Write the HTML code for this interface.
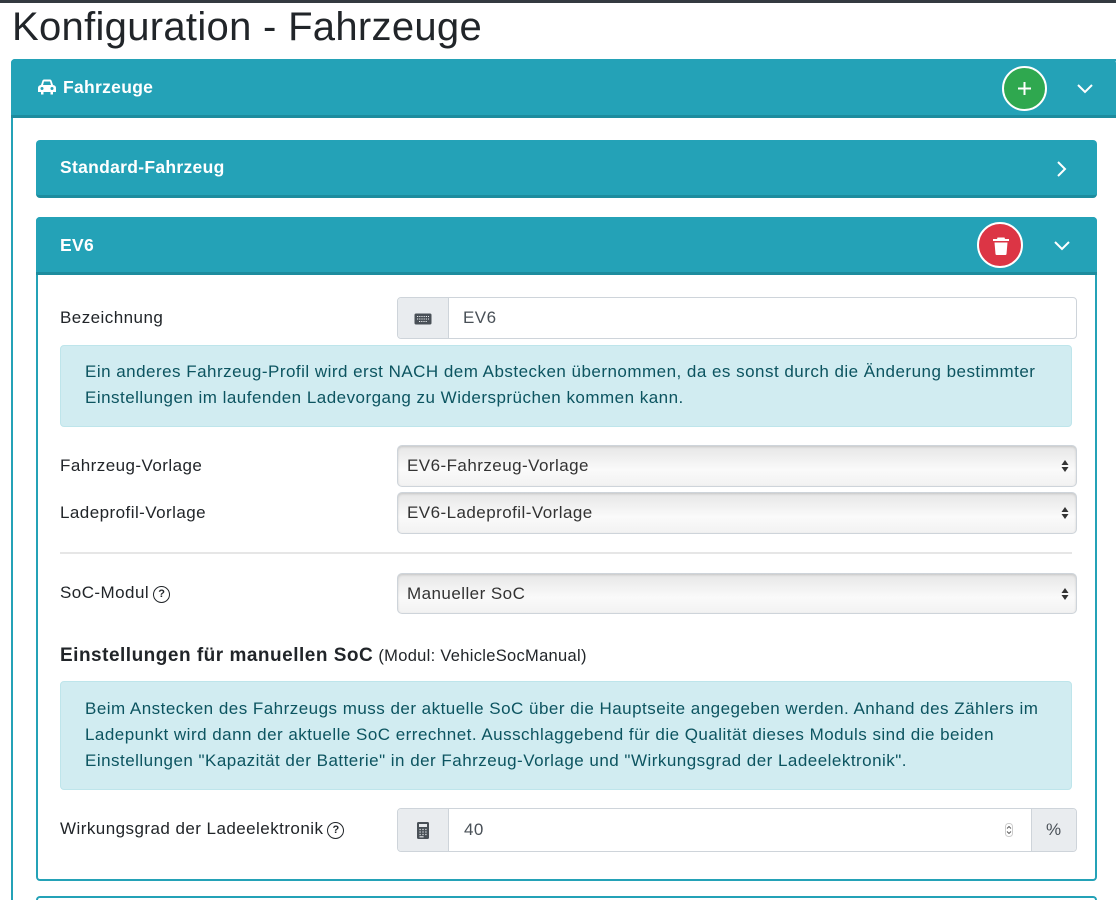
<!DOCTYPE html>
<html style="width:1116px;height:900px;overflow:hidden"><head><meta charset="utf-8">
<style>
*{box-sizing:border-box;margin:0;padding:0}
body{width:1116px;height:900px;overflow:hidden;background:#fff;font-family:"Liberation Sans",sans-serif;color:#212529;position:relative;font-size:17px;letter-spacing:0.45px}
.abs{position:absolute}
.topbar{left:0;top:0;width:1116px;height:3px;background:#343a40}
h1{position:absolute;left:12px;top:5px;font-size:40px;font-weight:400;color:#212529;letter-spacing:0.3px}
.hdr{background:#24a2b7;border-bottom:3px solid #1d8c9e;color:#fff;font-weight:bold;font-size:17.5px;letter-spacing:0.3px}
.circ{border-radius:50%;border:2px solid #fff}
.lbl{font-size:17px;color:#212529;white-space:nowrap}
.grp{border:1px solid #ced4da;border-radius:4px;background:#fff;overflow:hidden}
.addon{background:#e9ecef;border-right:1px solid #ced4da;height:100%;position:absolute;top:0}
.sel{border:1px solid #ced4da;border-radius:5px;background:linear-gradient(#e6e6e6,#fafafa 60%,#f2f2f2);box-shadow:inset 0 1px 2px rgba(0,0,0,.15);font-size:17px;color:#333;padding-left:9px;white-space:nowrap}
.alert{background:#d1ecf1;border:1px solid #bee5eb;border-radius:4px;color:#0c5460;font-size:17px;letter-spacing:0.48px;line-height:26px;padding:13px 24px;white-space:nowrap}
.arr{position:absolute;right:7px;top:13px;width:8px;height:14px}
.q{display:inline-block;width:17px;height:17px;border:1.7px solid #212529;border-radius:50%;font-size:11px;font-weight:bold;text-align:center;line-height:14px;vertical-align:1px;margin-left:4px;letter-spacing:0}
</style></head><body>
<div class="abs topbar"></div>
<h1>Konfiguration - Fahrzeuge</h1>

<div class="abs" style="left:11px;top:59px;width:1110px;height:845px;border:2px solid #24a2b7;border-radius:4px"></div>
<div class="abs hdr" style="left:11px;top:59px;width:1105px;height:59px;border-radius:4px 4px 0 0">
  <svg class="abs" style="left:26px;top:20px" width="20" height="16" viewBox="0 0 20 16"><path d="M4 6 L5.5 1.5 Q6 0.5 7 0.5 H13 Q14 0.5 14.5 1.5 L16 6 Q19 6.5 19 9 V13 H16 V15.5 H13.5 V13 H6.5 V15.5 H4 V13 H1 V9 Q1 6.5 4 6Z M6 6 H14 L13 2.5 H7Z" fill="#fff" fill-rule="evenodd"/><circle cx="5" cy="9.5" r="1.5" fill="#24a2b7"/><circle cx="15" cy="9.5" r="1.5" fill="#24a2b7"/></svg>
  <span class="abs" style="left:52px;top:18px">Fahrzeuge</span>
  <div class="abs circ" style="left:991px;top:7px;width:45px;height:45px;background:#2fa84f">
    <svg class="abs" style="left:12px;top:12px" width="17" height="17"><path d="M8.5 2V15M2 8.5H15" stroke="#fff" stroke-width="2"/></svg>
  </div>
  <svg class="abs" style="left:1065px;top:24px" width="18" height="12"><path d="M2 2L9 9L16 2" stroke="#fff" stroke-width="2" fill="none"/></svg>
</div>

<div class="abs hdr" style="left:36px;top:140px;width:1061px;height:58px;border-radius:4px">
  <span class="abs" style="left:24px;top:17px">Standard-Fahrzeug</span>
  <svg class="abs" style="left:1020px;top:20px" width="12" height="18"><path d="M2 2L9 9L2 16" stroke="#fff" stroke-width="2" fill="none"/></svg>
</div>

<div class="abs" style="left:36px;top:217px;width:1061px;height:664px;border:2px solid #24a2b7;border-radius:4px"></div>
<div class="abs hdr" style="left:36px;top:217px;width:1061px;height:58px;border-radius:4px 4px 0 0">
  <span class="abs" style="left:24px;top:18px">EV6</span>
  <div class="abs circ" style="left:941px;top:5px;width:46px;height:46px;background:#dc3545">
    <svg class="abs" style="left:13px;top:12px" width="18" height="20" viewBox="0 0 18 20"><path d="M5.5 1.5H12.5L13 3H17V5H1V3H5Z" fill="#fff"/><path d="M2.5 6.5H15.5L14.5 18Q14.4 19 13.4 19H4.6Q3.6 19 3.5 18Z" fill="#fff"/></svg>
  </div>
  <svg class="abs" style="left:1017px;top:23px" width="18" height="12"><path d="M2 2L9 9L16 2" stroke="#fff" stroke-width="2" fill="none"/></svg>
</div>

<div class="abs lbl" style="left:60px;top:308px">Bezeichnung</div>
<div class="abs grp" style="left:397px;top:297px;width:680px;height:42px">
  <div class="addon" style="left:0;width:51px">
    <svg class="abs" style="left:16px;top:15px" width="18" height="12"><rect x="0.5" y="0.5" width="17" height="11" rx="1.5" fill="#495057"/><path d="M3 3.5H15M3 6H15M5 8.5H13" stroke="#e9ecef" stroke-width="1" stroke-dasharray="1.2 1"/></svg>
  </div>
  <span class="abs" style="left:65px;top:10px;color:#495057">EV6</span>
</div>

<div class="abs alert" style="left:60px;top:345px;width:1012px;height:82px">Ein anderes Fahrzeug-Profil wird erst NACH dem Abstecken übernommen, da es sonst durch die Änderung bestimmter<br>Einstellungen im laufenden Ladevorgang zu Widersprüchen kommen kann.</div>

<div class="abs lbl" style="left:60px;top:456px">Fahrzeug-Vorlage</div>
<div class="abs sel" style="left:397px;top:445px;width:680px;height:42px;line-height:40px">EV6-Fahrzeug-Vorlage<svg class="arr" viewBox="0 0 8 14"><path d="M4 1L7.5 6H0.5Z M4 13L7.5 8H0.5Z" fill="#333"/></svg></div>
<div class="abs lbl" style="left:60px;top:503px">Ladeprofil-Vorlage</div>
<div class="abs sel" style="left:397px;top:492px;width:680px;height:42px;line-height:40px">EV6-Ladeprofil-Vorlage<svg class="arr" viewBox="0 0 8 14"><path d="M4 1L7.5 6H0.5Z M4 13L7.5 8H0.5Z" fill="#333"/></svg></div>

<div class="abs" style="left:60px;top:552px;width:1012px;height:2px;background:#e6e6e6"></div>

<div class="abs lbl" style="left:60px;top:583px">SoC-Modul<span class="q">?</span></div>
<div class="abs sel" style="left:397px;top:573px;width:680px;height:41px;line-height:39px">Manueller SoC<svg class="arr" viewBox="0 0 8 14"><path d="M4 1L7.5 6H0.5Z M4 13L7.5 8H0.5Z" fill="#333"/></svg></div>

<div class="abs" style="left:60px;top:645px;white-space:nowrap"><b style="font-size:19px;letter-spacing:0.5px">Einstellungen für manuellen SoC</b> <span style="font-size:16.5px;letter-spacing:0.3px">(Modul: VehicleSocManual)</span></div>

<div class="abs alert" style="left:60px;top:681px;width:1012px;height:109px;padding-top:14px">Beim Anstecken des Fahrzeugs muss der aktuelle SoC über die Hauptseite angegeben werden. Anhand des Zählers im<br>Ladepunkt wird dann der aktuelle SoC errechnet. Ausschlaggebend für die Qualität dieses Moduls sind die beiden<br>Einstellungen "Kapazität der Batterie" in der Fahrzeug-Vorlage und "Wirkungsgrad der Ladeelektronik".</div>

<div class="abs lbl" style="left:60px;top:819px">Wirkungsgrad der Ladeelektronik<span class="q">?</span></div>
<div class="abs grp" style="left:397px;top:808px;width:680px;height:44px">
  <div class="addon" style="left:0;width:51px">
    <svg class="abs" style="left:19px;top:13px" width="12" height="17" viewBox="0 0 12 17"><rect x="0" y="0" width="12" height="17" rx="1.5" fill="#495057"/><rect x="2" y="2" width="8" height="3" fill="#e9ecef"/><path d="M2.5 7.5H3.7M5.4 7.5H6.6M8.3 7.5H9.5M2.5 10H3.7M5.4 10H6.6M8.3 10H9.5M2.5 12.5H3.7M5.4 12.5H6.6M8.3 12.5H9.5M2.5 14.8H6.6" stroke="#e9ecef" stroke-width="1.2"/></svg>
  </div>
  <span class="abs" style="left:66px;top:11px;color:#495057">40</span>
  <svg class="abs" style="left:607px;top:14px" width="8" height="14"><rect x="0.5" y="0.5" width="7" height="13" rx="3" fill="#fff" stroke="#ccc"/><path d="M2 5.5L4 3.5L6 5.5M2 8.5L4 10.5L6 8.5" stroke="#555" fill="none" stroke-width="0.9"/></svg>
  <div class="addon" style="left:633px;width:47px;border-right:none;border-left:1px solid #ced4da"><span class="abs" style="left:14px;top:11px;color:#495057">%</span></div>
</div>

<div class="abs" style="left:36px;top:896px;width:1061px;height:4px;border:2px solid #24a2b7;border-radius:4px 4px 0 0;border-bottom:none"></div>
</body></html>
